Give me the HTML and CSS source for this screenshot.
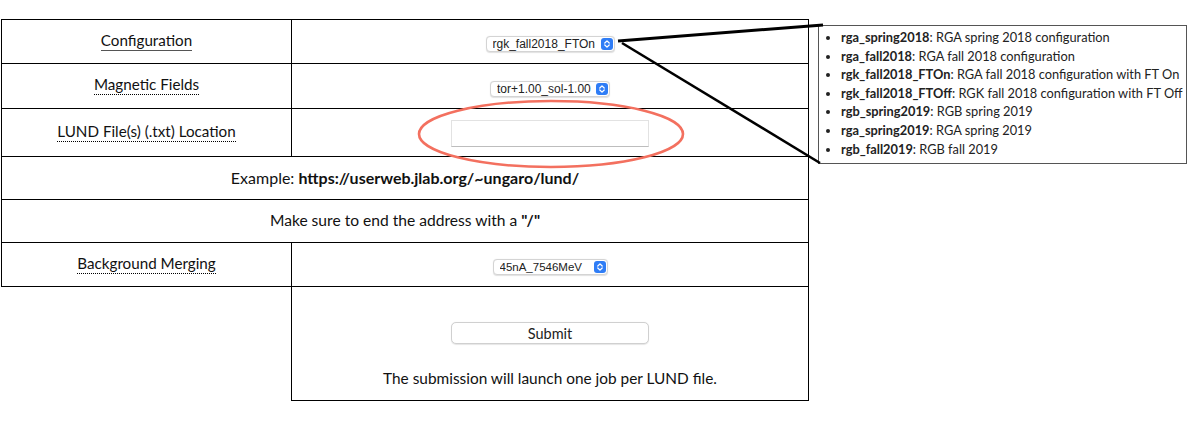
FILE: index.html
```html
<!DOCTYPE html>
<html lang="en">
<head>
<meta charset="utf-8">
<title>Submit LUND jobs</title>
<link rel="stylesheet" href="styles.css">
</head>
<body>
<div class="page">
  <form class="form">
    <table class="grid">
      <colgroup><col class="c1"><col class="c2"></colgroup>
      <tr class="r1">
        <td><abbr class="lbl solid" title="Configuration">Configuration</abbr></td>
        <td>
          <span class="sel w1">
            <select><option>rgk_fall2018_FTOn</option></select>
            <svg class="step" viewBox="0 0 12 12" width="12" height="12"><rect width="12" height="12" rx="3" fill="#2f7df6"/><path d="M3.8 5 L6 2.9 L8.2 5 M3.8 7 L6 9.1 L8.2 7" fill="none" stroke="#fff" stroke-width="1.3" stroke-linecap="round" stroke-linejoin="round"/></svg>
          </span>
        </td>
      </tr>
      <tr class="r2">
        <td><abbr class="lbl" title="Magnetic Fields">Magnetic Fields</abbr></td>
        <td>
          <span class="sel w2">
            <select><option>tor+1.00_sol-1.00</option></select>
            <svg class="step" viewBox="0 0 12 12" width="12" height="12"><rect width="12" height="12" rx="3" fill="#2f7df6"/><path d="M3.8 5 L6 2.9 L8.2 5 M3.8 7 L6 9.1 L8.2 7" fill="none" stroke="#fff" stroke-width="1.3" stroke-linecap="round" stroke-linejoin="round"/></svg>
          </span>
        </td>
      </tr>
      <tr class="r3">
        <td><abbr class="lbl" title="LUND File(s) (.txt) Location">LUND File(s) (.txt) Location</abbr></td>
        <td><input class="txt" type="text"></td>
      </tr>
      <tr class="r4">
        <td colspan="2" class="wide ex">Example: <b>https://userweb.jlab.org/~ungaro/lund/</b></td>
      </tr>
      <tr class="r5">
        <td colspan="2" class="wide">Make sure to end the address with a <b>"/"</b></td>
      </tr>
      <tr class="r6">
        <td><abbr class="lbl" title="Background Merging">Background Merging</abbr></td>
        <td>
          <span class="sel w3">
            <select><option>45nA_7546MeV</option></select>
            <svg class="step" viewBox="0 0 12 12" width="12" height="12"><rect width="12" height="12" rx="3" fill="#2f7df6"/><path d="M3.8 5 L6 2.9 L8.2 5 M3.8 7 L6 9.1 L8.2 7" fill="none" stroke="#fff" stroke-width="1.3" stroke-linecap="round" stroke-linejoin="round"/></svg>
          </span>
        </td>
      </tr>
      <tr class="r7">
        <td class="blank"></td>
        <td class="submitcell">
          <button type="button" class="btn">Submit</button>
          <p class="note">The submission will launch one job per LUND file.</p>
        </td>
      </tr>
    </table>
  </form>

  <div class="popup">
    <ul>
      <li><b>rga_spring2018</b>: RGA spring 2018 configuration</li>
      <li><b>rga_fall2018</b>: RGA fall 2018 configuration</li>
      <li><b>rgk_fall2018_FTOn</b>: RGA fall 2018 configuration with FT On</li>
      <li><b>rgk_fall2018_FTOff</b>: RGK fall 2018 configuration with FT Off</li>
      <li><b>rgb_spring2019</b>: RGB spring 2019</li>
      <li><b>rga_spring2019</b>: RGA spring 2019</li>
      <li><b>rgb_fall2019</b>: RGB fall 2019</li>
    </ul>
  </div>

  <svg class="annot" width="1197" height="424" viewBox="0 0 1197 424">
    <ellipse cx="551" cy="134" rx="132" ry="33" fill="none" stroke="#f3705f" stroke-width="2.6"/>
    <line x1="618" y1="41" x2="823" y2="25" stroke="#000" stroke-width="3"/>
    <line x1="622" y1="43" x2="820" y2="163" stroke="#000" stroke-width="2.6"/>
  </svg>
</div>
</body>
</html>
```

FILE: styles.css
```css
html, body {
  margin: 0;
  padding: 0;
  background: #fff;
}

.page {
  position: relative;
  width: 1197px;
  height: 424px;
  overflow: hidden;
  font-family: Lato, "Noto Sans", sans-serif;
  color: #111;
}

.form {
  padding: 19px 0 0 1px;
  margin: 0;
}

.grid {
  border-collapse: collapse;
  table-layout: fixed;
  width: 807px;
  font-size: 15.2px;
}

.grid .c1 { width: 290px; }
.grid .c2 { width: 517px; }

.grid td {
  border: 1px solid #000;
  text-align: center;
  vertical-align: middle;
  padding: 0;
}

.grid td.blank {
  border: none;
}

.r1 { height: 44px; }
.r2 { height: 45px; }
.r3 { height: 48px; }
.r4 { height: 43px; }
.r5 { height: 43px; }
.r6 { height: 44px; }
.r7 { height: 114px; }

.lbl {
  display: inline-block;
  text-decoration: none;
  line-height: 18px;
  border-bottom: 1px dotted #000;
  padding-bottom: 1px;
  position: relative;
  top: -1px;
}

.lbl.solid {
  border-bottom: 1px solid #555;
}

.wide {
  font-size: 15.6px;
}

.wide.ex {
  font-size: 16px;
}

.wide > * {
  position: relative;
}

.r4 td, .r5 td {
  padding-bottom: 2px;
}

.sel {
  display: inline-flex;
  align-items: center;
  justify-content: space-between;
  box-sizing: border-box;
  height: 16px;
  padding: 0 1px 0 6px;
  border: 1px solid #d4d4d4;
  border-radius: 4px;
  background: #fff;
  box-shadow: 0 0.5px 1px rgba(0, 0, 0, 0.12);
  vertical-align: middle;
  position: relative;
  top: 1px;
}

.sel select {
  -webkit-appearance: none;
  appearance: none;
  border: none;
  background: transparent;
  padding: 0;
  margin: 0;
  font-family: "Liberation Sans", Arial, sans-serif;
  font-size: 12px;
  color: #222;
  line-height: 14px;
  height: 14px;
  outline: none;
}

.sel .step {
  display: block;
  flex: none;
}

.w1 { width: 129px; }
.w2 { width: 120px; }
.w3 { width: 115px; }
.w3 select { font-size: 11.5px; }

.txt {
  box-sizing: border-box;
  width: 198px;
  height: 27px;
  margin: 0;
  padding: 0 4px;
  border: 1px solid #e2e2e2;
  border-bottom-color: #bdbdbd;
  background: #fff;
  vertical-align: middle;
  position: relative;
  top: 1px;
}

.submitcell {
  vertical-align: top !important;
  padding-top: 35px !important;
}

.btn {
  display: block;
  box-sizing: border-box;
  width: 198px;
  height: 22px;
  margin: 0 auto;
  padding: 0;
  font-family: Lato, "Noto Sans", sans-serif;
  font-size: 14.5px;
  color: #222;
  background: #fff;
  border: 1px solid #d0d0d0;
  border-radius: 5px;
  box-shadow: 0 0.5px 1px rgba(0, 0, 0, 0.1);
}

.note {
  margin: 25px 0 0;
  font-size: 15.4px;
  line-height: 18px;
}

.popup {
  position: absolute;
  left: 818px;
  top: 25px;
  width: 367px;
  height: 137px;
  border: 1px solid #555;
  background: #fff;
  font-family: Lato, "Noto Sans", sans-serif;
  font-size: 12.8px;
  color: #222;
}

.popup ul {
  margin: 0;
  padding: 2px 0 0 22px;
  list-style: disc;
}

.popup li {
  line-height: 18.6px;
  white-space: nowrap;
}

.annot {
  position: absolute;
  left: 0;
  top: 0;
  pointer-events: none;
}
```
